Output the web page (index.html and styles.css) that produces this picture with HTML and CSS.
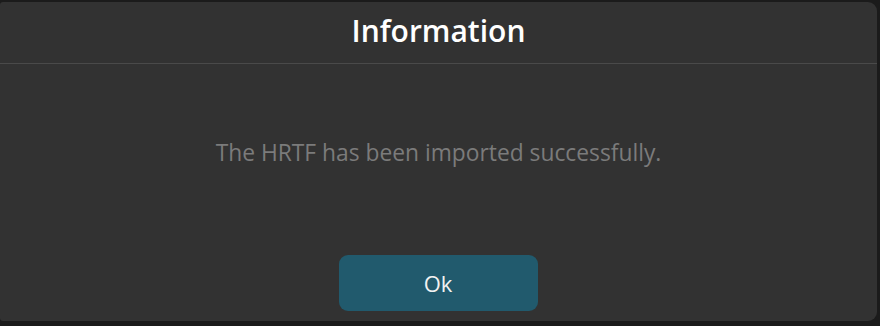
FILE: index.html
```html
<!DOCTYPE html>
<html lang="en">
<head>
<meta charset="utf-8">
<title>Information</title>
<link rel="stylesheet" href="styles.css">
</head>
<body>
<div class="dialog">
  <div class="dialog-header">
    <h1 class="dialog-title">Information</h1>
  </div>
  <div class="dialog-body">
    <p class="dialog-message">The HRTF has been imported successfully.</p>
    <button class="dialog-button" type="button">Ok</button>
  </div>
</div>
</body>
</html>
```

FILE: styles.css
```css
html, body {
  margin: 0;
  padding: 0;
  background: #1b1b1b;
  width: 880px;
  height: 326px;
  overflow: hidden;
}

body {
  padding: 2px 3px 5px 0;
  box-sizing: border-box;
  font-family: "Open Sans", sans-serif;
  font-variant-ligatures: none;
}

.dialog {
  height: 319px;
  background: #323232;
  border-radius: 3px 9px 9px 3px;
  display: flex;
  flex-direction: column;
}

.dialog-header {
  height: 61px;
  border-bottom: 1px solid #4a4a4a;
  display: flex;
  align-items: center;
  justify-content: center;
}

.dialog-title {
  margin: 0 0 4px;
  font-size: 30px;
  font-weight: 600;
  color: #ffffff;
  line-height: 1;
}

.dialog-body {
  flex: 1;
  display: flex;
  flex-direction: column;
  align-items: center;
  padding: 74px 0 10px;
}

.dialog-message {
  margin: 0;
  font-size: 22.8px;
  line-height: 30px;
  color: #7b7b7b;
}

.dialog-button {
  margin-top: auto;
  width: 199px;
  height: 56px;
  border: none;
  border-radius: 9px;
  background: #215a6d;
  color: #f2f2f2;
  font-family: "Open Sans", sans-serif;
  font-size: 22px;
  padding: 0;
  margin-left: -1px;
}
```
